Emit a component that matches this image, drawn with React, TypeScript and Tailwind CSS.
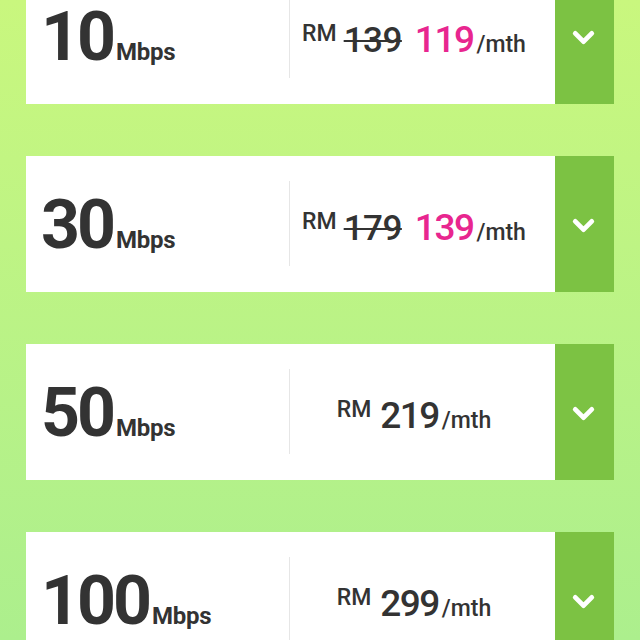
import { ChevronDown } from "lucide-react";

type Plan = {
  speed: string;
  was?: string;
  price: string;
};

const plans: Plan[] = [
  { speed: "10", was: "139", price: "119" },
  { speed: "30", was: "179", price: "139" },
  { speed: "50", price: "219" },
  { speed: "100", price: "299" },
];

const PlanRow = ({ plan }: { plan: Plan }) => (
  <div className="flex h-[136px] bg-white">
    <div className="w-[263px] shrink-0 pl-[15px] pt-[35px]">
      <div className="flex items-baseline text-[#333333]">
        <span className="text-[68px] leading-none font-bold tracking-[-3px]">{plan.speed}</span>
        <span className="ml-[3px] text-[24px] leading-none font-bold tracking-[-0.3px]">Mbps</span>
      </div>
    </div>

    <div className="flex flex-1 items-center">
      <div className="h-[85px] w-px bg-[#e6e6e6] -mt-[1px]" />
      <div className="flex flex-1 justify-center pr-[16px] pt-[6px] -ml-px">
        <div className="flex items-baseline text-[#333333]">
          <span className="self-start mt-[1px] text-[23px] leading-none font-medium">RM</span>
          {plan.was && (
            <span className="ml-[7px] text-[35px] leading-none font-medium tracking-[-0.5px] line-through decoration-[2px]">
              {plan.was}
            </span>
          )}
          <span
            className={
              plan.was
                ? "ml-[13px] text-[37px] leading-none font-medium tracking-[-1.5px] text-[#e8268f]"
                : "ml-[9px] text-[37px] leading-none font-medium tracking-[-1.5px]"
            }
          >
            {plan.price}
          </span>
          <span className="ml-[3px] text-[23px] leading-none font-medium">/mth</span>
        </div>
      </div>
    </div>

    <button className="flex w-[59px] shrink-0 items-center justify-center bg-[#7cc243] text-white">
      <ChevronDown size={33} strokeWidth={3.5} className="-ml-[3px] mt-[2px]" />
    </button>
  </div>
);

export default function App() {
  return (
    <div
      className="h-[640px] w-[640px] overflow-hidden bg-gradient-to-b from-[#c9f77e] to-[#acef8d]"
      style={{ fontFamily: "Roboto, 'Liberation Sans', sans-serif" }}
    >
      <div className="-mt-[32px] flex flex-col gap-[52px] px-[26px]">
        {plans.map((plan) => (
          <PlanRow key={plan.speed} plan={plan} />
        ))}
      </div>
    </div>
  );
}
